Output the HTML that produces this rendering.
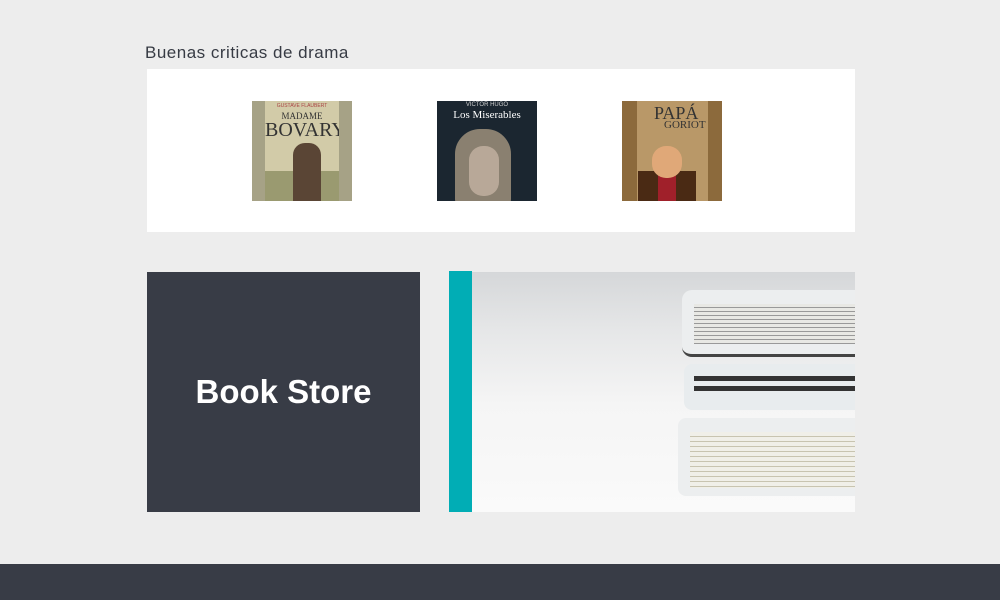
<!DOCTYPE html>
<html><head><style>
body{margin:0;width:1000px;height:600px;background:#ededed;font-family:"Liberation Sans",sans-serif;position:relative;overflow:hidden}
.a{position:absolute}
</style></head><body>
<div class="a" style="left:145px;top:43px;font-size:17px;letter-spacing:0.5px;color:#373b44">Buenas criticas de drama</div>
<div class="a" style="left:147px;top:69px;width:708px;height:163px;background:#fff"></div>
<!-- Bovary -->
<div class="a" style="left:252px;top:101px;width:100px;height:100px;background:#a6a286"></div>
<div class="a" style="left:265px;top:101px;width:74px;height:100px;background:#d2cba8;overflow:hidden">
 <div class="a" style="left:0;top:2px;width:74px;text-align:center;font-size:5px;color:#a44">GUSTAVE FLAUBERT</div>
 <div class="a" style="left:0;top:10px;width:74px;text-align:center;font:9px 'Liberation Serif',serif;color:#333">MADAME</div>
 <div class="a" style="left:0;top:18px;width:74px;text-align:center;font:20px 'Liberation Serif',serif;color:#333">BOVARY</div>
 <div class="a" style="left:0;top:70px;width:74px;height:30px;background:#9a9a70"></div>
 <div class="a" style="left:28px;top:42px;width:28px;height:58px;background:#5a4535;border-radius:12px 12px 0 0"></div>
</div>
<!-- Miserables -->
<div class="a" style="left:437px;top:101px;width:100px;height:100px;background:#1b2630;overflow:hidden">
 <div class="a" style="left:0;top:1px;width:100px;text-align:center;font-size:6px;color:#ccc">VICTOR HUGO</div>
 <div class="a" style="left:0;top:8px;width:100px;text-align:center;font:11px 'Liberation Serif',serif;color:#fff">Los Miserables</div>
 <div class="a" style="left:18px;top:28px;width:56px;height:80px;background:#8a8070;border-radius:25px 25px 10px 10px"></div>
 <div class="a" style="left:32px;top:45px;width:30px;height:50px;background:#b8a898;border-radius:14px"></div>
</div>
<!-- Goriot -->
<div class="a" style="left:622px;top:101px;width:100px;height:100px;background:#8c6a3c;overflow:hidden">
 <div class="a" style="left:15px;top:0;width:71px;height:100px;background:#b99868"></div>
 <div class="a" style="left:32px;top:2px;font:18px 'Liberation Serif',serif;color:#333">PAPÁ</div>
 <div class="a" style="left:42px;top:18px;font:11px 'Liberation Serif',serif;color:#333">GORIOT</div>
 <div class="a" style="left:16px;top:70px;width:58px;height:30px;background:#4a2a14"></div>
 <div class="a" style="left:36px;top:72px;width:18px;height:28px;background:#a0202a"></div>
 <div class="a" style="left:30px;top:45px;width:30px;height:32px;background:#e0a878;border-radius:14px"></div>
</div>
<!-- Book Store -->
<div class="a" style="left:147px;top:272px;width:273px;height:240px;background:#383c46;color:#fff;font-size:33px;font-weight:bold;display:flex;align-items:center;justify-content:center">Book Store</div>
<div class="a" style="left:449px;top:271px;width:23px;height:241px;background:#01adb5"></div>
<div class="a" style="left:472px;top:272px;width:383px;height:240px;background:linear-gradient(180deg,#d5d7d9 0%,#e6e7e8 25%,#f5f5f5 55%,#fafafa 100%);overflow:hidden">
 <div class="a" style="left:210px;top:18px;width:180px;height:64px;background:#eceeef;border-radius:10px 0 0 10px;border-bottom:3px solid #444"></div>
 <div class="a" style="left:222px;top:32px;width:170px;height:40px;background:repeating-linear-gradient(180deg,#e8e8e4 0 3px,#999 3px 4px)"></div>
 <div class="a" style="left:212px;top:92px;width:180px;height:46px;background:#e8ecee;border-radius:8px 0 0 8px"></div>
 <div class="a" style="left:222px;top:104px;width:170px;height:5px;background:#333"></div>
 <div class="a" style="left:222px;top:114px;width:170px;height:5px;background:#333"></div>
 <div class="a" style="left:206px;top:146px;width:185px;height:78px;background:#eceeef;border-radius:8px 0 0 8px"></div>
 <div class="a" style="left:218px;top:160px;width:170px;height:56px;background:repeating-linear-gradient(180deg,#f0efe8 0 4px,#c8c4b0 4px 5px)"></div>
</div>
<div class="a" style="left:0;top:564px;width:1000px;height:36px;background:#383c46"></div>
</body></html>
